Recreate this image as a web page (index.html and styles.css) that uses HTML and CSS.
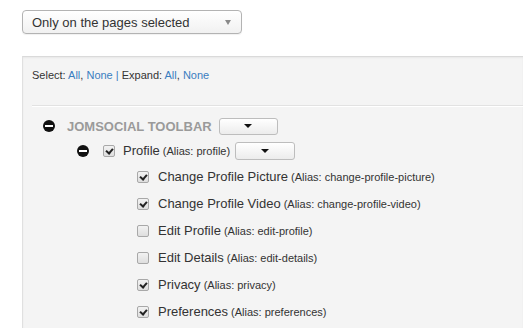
FILE: index.html
```html
<!DOCTYPE html>
<html lang="en">
  <head>
    <meta charset="UTF-8" />
    <title>Menu assignment</title>
    <link rel="stylesheet" href="styles.css">
  </head>
  <body>
    <div class="select">
      <span>Only on the pages selected</span>
      <span class="select-arrow"></span>
    </div>

    <div class="panel">
      <div class="links">
        Select: <a href="#">All</a>, <a href="#">None</a> <span class="sep">|</span>
        Expand: <a href="#">All</a>, <a href="#">None</a>
      </div>
      <div class="rule"></div>

      <div class="tree">
        <div class="row row-menu">
          <span class="toggle"></span>
          <span class="menu-title">JOMSOCIAL TOOLBAR</span>
          <button class="drop"><span class="caret"></span></button>
        </div>

        <div class="row row-parent">
          <span class="toggle"></span>
          <span class="check on"></span>
          <span class="label">Profile</span>
          <span class="alias">(Alias: profile)</span>
          <button class="drop"><span class="caret"></span></button>
        </div>

        <div class="row row-child">
          <span class="check on"></span>
          <span class="label">Change Profile Picture</span>
          <span class="alias">(Alias: change-profile-picture)</span>
        </div>
        <div class="row row-child">
          <span class="check on"></span>
          <span class="label">Change Profile Video</span>
          <span class="alias">(Alias: change-profile-video)</span>
        </div>
        <div class="row row-child">
          <span class="check"></span>
          <span class="label">Edit Profile</span>
          <span class="alias">(Alias: edit-profile)</span>
        </div>
        <div class="row row-child">
          <span class="check"></span>
          <span class="label">Edit Details</span>
          <span class="alias">(Alias: edit-details)</span>
        </div>
        <div class="row row-child">
          <span class="check on"></span>
          <span class="label">Privacy</span>
          <span class="alias">(Alias: privacy)</span>
        </div>
        <div class="row row-child">
          <span class="check on"></span>
          <span class="label">Preferences</span>
          <span class="alias">(Alias: preferences)</span>
        </div>
      </div>
    </div>
  </body>
</html>
```

FILE: styles.css
```css
html,
body {
  height: 100%;
  overflow: hidden;
}

body {
  margin: 0;
  padding: 10px 0 0 22px;
  box-sizing: border-box;
  font-family: "Liberation Sans", Arial, sans-serif;
  color: #333;
  background: #fff;
}

.select {
  box-sizing: border-box;
  width: 220px;
  height: 24px;
  padding: 0 10px 0 9px;
  border: 1px solid #b3b3b3;
  border-radius: 4px;
  background: linear-gradient(#ffffff, #f1f1f1);
  box-shadow: 0 1px 1px rgba(0, 0, 0, 0.06);
  display: flex;
  align-items: center;
  justify-content: space-between;
  font-size: 13px;
  color: #333;
}

.select-arrow {
  width: 0;
  height: 0;
  border-left: 3.5px solid transparent;
  border-right: 3.5px solid transparent;
  border-top: 5px solid #8a8a8a;
  margin-top: 1px;
}

.panel {
  box-sizing: border-box;
  height: 272px;
  margin-top: 22px;
  padding: 11px 0 0 9px;
  background: #f4f4f4;
  border-left: 1px solid #e0e0e0;
  border-top: 1px solid #dadada;
  box-shadow: inset 0 1px 2px rgba(0, 0, 0, 0.05);
}

.links {
  font-size: 11px;
  line-height: 14px;
  color: #333;
}

.links a,
.links .sep {
  color: #3a7dc0;
  text-decoration: none;
}

.rule {
  margin-top: 23px;
  border-top: 1px solid #e2e2e2;
  border-bottom: 1px solid #ffffff;
}

.tree {
  margin-top: 7px;
}

.row {
  display: flex;
  align-items: center;
  white-space: nowrap;
}

.row-menu {
  height: 24px;
  padding-left: 11px;
}

.row-parent {
  height: 25px;
  padding-left: 45px;
}

.row-child {
  height: 27px;
  padding-left: 105px;
}

.toggle {
  position: relative;
  width: 12px;
  height: 12px;
  border-radius: 50%;
  background: #111;
  flex: none;
}

.toggle::after {
  content: "";
  position: absolute;
  left: 2px;
  top: 5px;
  width: 8px;
  height: 2px;
  background: #fff;
}

.menu-title {
  margin-left: 12px;
  font-size: 13px;
  font-weight: bold;
  color: #9a9a9a;
}

.drop {
  box-sizing: border-box;
  width: 59px;
  height: 17px;
  margin-left: 7px;
  padding: 0;
  border: 1px solid #bdbdbd;
  border-radius: 3px;
  background: linear-gradient(#ffffff, #ececec);
  display: flex;
  align-items: center;
  justify-content: center;
}

.row-parent .drop {
  width: 60px;
  height: 18px;
  margin-left: 5px;
}

.caret {
  width: 0;
  height: 0;
  border-left: 4px solid transparent;
  border-right: 4px solid transparent;
  border-top: 4px solid #111;
}

.check {
  box-sizing: border-box;
  position: relative;
  width: 12px;
  height: 12px;
  border: 1px solid #a8a8a8;
  border-radius: 2px;
  background: linear-gradient(#f2f2f2, #dedede);
  flex: none;
}

.row-parent .check {
  margin-left: 14px;
}

.check.on::after {
  content: "";
  position: absolute;
  left: 3px;
  top: 1px;
  width: 3px;
  height: 5px;
  border-right: 2px solid #222;
  border-bottom: 2px solid #222;
  transform: rotate(40deg);
}

.label {
  margin-left: 8px;
  font-size: 13px;
  color: #333;
}

.row-child .label {
  margin-left: 9px;
}

.alias {
  margin-left: 3px;
  font-size: 11px;
  color: #333;
}
```
